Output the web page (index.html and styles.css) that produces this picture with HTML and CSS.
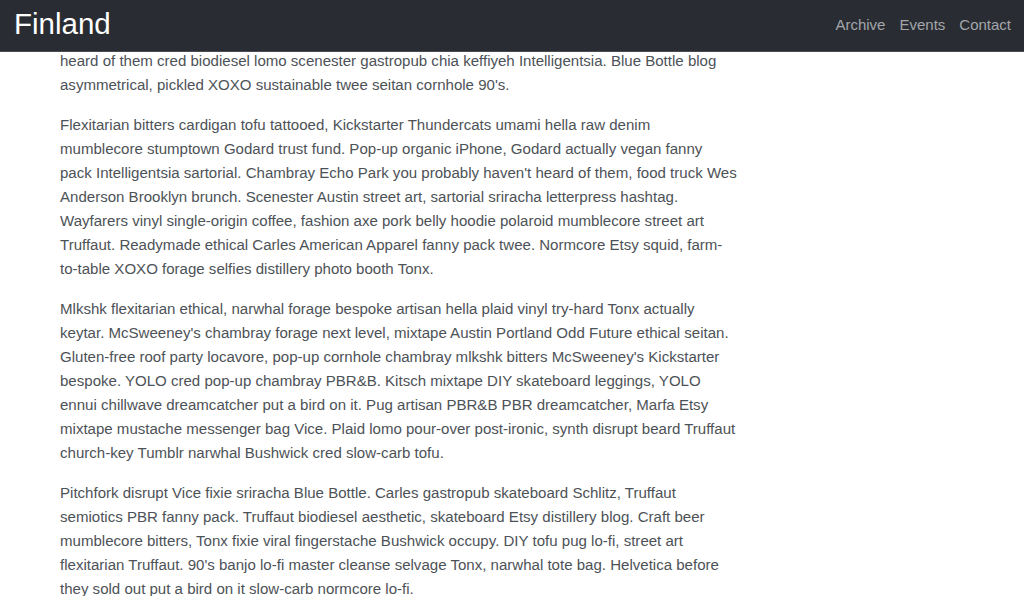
FILE: index.html
```html
<!DOCTYPE html>
<html lang="en">
<head>
<meta charset="utf-8">
<title>Finland</title>
<link rel="stylesheet" href="styles.css">
</head>
<body>
<header class="navbar">
  <a class="brand" href="#">Finland</a>
  <nav class="nav">
    <a href="#">Archive</a>
    <a href="#">Events</a>
    <a href="#">Contact</a>
  </nav>
</header>
<main class="content">
  <p>heard of them cred biodiesel lomo scenester gastropub chia keffiyeh Intelligentsia. Blue Bottle blog asymmetrical, pickled XOXO sustainable twee seitan cornhole 90's.</p>
  <p>Flexitarian bitters cardigan tofu tattooed, Kickstarter Thundercats umami hella raw denim<br>mumblecore stumptown Godard trust fund. Pop-up organic iPhone, Godard actually vegan fanny<br>pack Intelligentsia sartorial. Chambray Echo Park you probably haven't heard of them, food truck Wes Anderson Brooklyn brunch. Scenester Austin street art, sartorial sriracha letterpress hashtag. Wayfarers vinyl single-origin coffee, fashion axe pork belly hoodie polaroid mumblecore street art Truffaut. Readymade ethical Carles American Apparel fanny pack twee. Normcore Etsy squid, farm-to-table XOXO forage selfies distillery photo booth Tonx.</p>
  <p>Mlkshk flexitarian ethical, narwhal forage bespoke artisan hella plaid vinyl try-hard Tonx actually keytar. McSweeney's chambray forage next level, mixtape Austin Portland Odd Future ethical seitan. Gluten-free roof party locavore, pop-up cornhole chambray mlkshk bitters McSweeney's Kickstarter bespoke. YOLO cred pop-up chambray PBR&amp;B. Kitsch mixtape DIY skateboard leggings, YOLO ennui chillwave dreamcatcher put a bird on it. Pug artisan PBR&amp;B PBR dreamcatcher, Marfa Etsy mixtape mustache messenger bag Vice. Plaid lomo pour-over post-ironic, synth disrupt beard Truffaut church-key Tumblr narwhal Bushwick cred slow-carb tofu.</p>
  <p>Pitchfork disrupt Vice fixie sriracha Blue Bottle. Carles gastropub skateboard Schlitz, Truffaut semiotics PBR fanny pack. Truffaut biodiesel aesthetic, skateboard Etsy distillery blog. Craft beer mumblecore bitters, Tonx fixie viral fingerstache Bushwick occupy. DIY tofu pug lo-fi, street art flexitarian Truffaut. 90's banjo lo-fi master cleanse selvage Tonx, narwhal tote bag. Helvetica before they sold out put a bird on it slow-carb normcore lo-fi.</p>
</main>
</body>
</html>
```
FILE: styles.css
```css
html, body {
  margin: 0;
  padding: 0;
  background: #ffffff;
}
body {
  font-family: "Liberation Sans", Arial, sans-serif;
  color: #4d5257;
}
.navbar {
  position: fixed;
  top: 0;
  left: 0;
  right: 0;
  height: 51px;
  background: #292d33;
  border-bottom: 1px solid #4a4e54;
  display: flex;
  align-items: center;
  justify-content: space-between;
  padding: 0 13px 0 14px;
  z-index: 10;
}
.brand {
  color: #ffffff;
  text-decoration: none;
  font-size: 29.5px;
  line-height: 1;
  padding-bottom: 3px;
}
.nav {
  display: flex;
  gap: 14px;
  padding-bottom: 2px;
}
.nav a {
  color: #a3a6aa;
  text-decoration: none;
  font-size: 15px;
}
.content {
  padding: 49px 0 0 60px;
  width: 679px;
}
.content p {
  margin: 0 0 16px;
  font-size: 15.05px;
  line-height: 24px;
}
```
